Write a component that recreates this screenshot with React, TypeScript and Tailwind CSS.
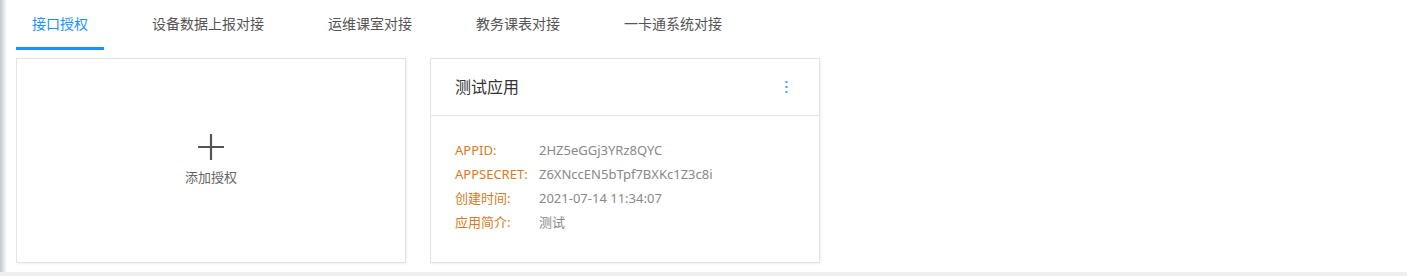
import { useState } from 'react';

const TABS = ['接口授权', '设备数据上报对接', '运维课室对接', '教务课表对接', '一卡通系统对接'];

const INFO = [
  { label: 'APPID:', value: '2HZ5eGGj3YRz8QYC' },
  { label: 'APPSECRET:', value: 'Z6XNccEN5bTpf7BXKc1Z3c8i' },
  { label: '创建时间:', value: '2021-07-14 11:34:07' },
  { label: '应用简介:', value: '测试' },
];

export default function App() {
  const [active, setActive] = useState(0);

  return (
    <div className="w-full h-[276px] flex flex-col bg-white font-['Noto_Sans','Noto_Sans_CJK_SC',sans-serif]">
      <div className="flex flex-1 min-h-0">
        {/* sidebar shadow edge */}
        <div className="w-[7px] bg-gradient-to-r from-[#c3c7cc] via-[#dfe2e5] to-white" />

        <div className="flex-1 pl-[9px]">
          {/* TABS */}
          <div className="flex gap-8 h-[50px]">
            {TABS.map((t, i) => (
              <button
                key={t}
                onClick={() => setActive(i)}
                className={
                  'px-4 pt-[14px] text-[14px] leading-5 border-b-[3px] flex items-start ' +
                  (i === active
                    ? 'text-[#1890ff] border-[#1890ff]'
                    : 'text-[#555] border-transparent')
                }
              >
                {t}
              </button>
            ))}
          </div>

          {/* CARDS */}
          <div className="flex gap-6 mt-2">
            <div className="w-[390px] h-[205px] border border-[#e3e3e3] shadow-[1px_1px_2px_rgba(0,0,0,0.06)] flex flex-col items-center justify-center cursor-pointer">
              <svg width="26" height="26" viewBox="0 0 26 26" className="mb-[7px]">
                <path d="M13 0v26M0 13h26" stroke="#555" strokeWidth="2.2" />
              </svg>
              <span className="text-[13px] leading-5 text-[#666]">添加授权</span>
            </div>

            <div className="w-[390px] h-[205px] border border-[#e3e3e3] shadow-[1px_1px_2px_rgba(0,0,0,0.06)] flex flex-col">
              <div className="h-[57px] flex items-center justify-between pl-6 pr-[31px] border-b border-[#e6e6e6]">
                <span className="text-[16px] text-[#333]">测试应用</span>
                <svg width="3" height="12" viewBox="0 0 3 12">
                  <rect x="0.5" y="0" width="2" height="2" fill="#409eff" />
                  <rect x="0.5" y="5" width="2" height="2" fill="#409eff" />
                  <rect x="0.5" y="10" width="2" height="2" fill="#409eff" />
                </svg>
              </div>
              <div className="pl-6 pt-[23px]">
                {INFO.map((r) => (
                  <div key={r.label} className="flex h-6 items-center text-[13px]">
                    <span className="w-[84px] text-[#d87a1e]">{r.label}</span>
                    <span className="text-[#888]">{r.value}</span>
                  </div>
                ))}
              </div>
            </div>
          </div>
        </div>
      </div>
      <div className="h-[4px] bg-[#eeeeee]" />
    </div>
  );
}
